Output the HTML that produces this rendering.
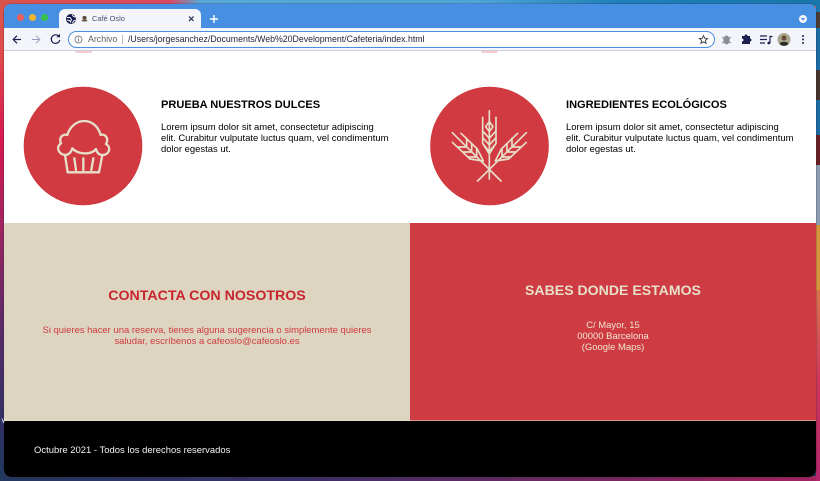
<!DOCTYPE html>
<html lang="es"><head><meta charset="utf-8"><title>Café Oslo</title>
<style>
*{box-sizing:border-box}
html,body{margin:0;padding:0}
body{width:820px;height:481px;position:relative;overflow:hidden;font-family:"Liberation Sans",Arial,sans-serif;background:linear-gradient(180deg,#d9564a 0,#e0474a 60px,#d8164f 140px,#a3245f 220px,#5e2a68 320px,#2d3165 430px,#1f3a5e 481px)}
.a{position:absolute;white-space:nowrap}
#top{left:0;top:0;width:820px;height:6px;background:linear-gradient(90deg,#d9534a 0,#d84a62 170px,#58a6d8 200px,#4ea3d6 480px,#1f7fb8 620px,#1a76ad 820px)}
#bot{left:0;top:476px;width:820px;height:5px;background:linear-gradient(90deg,#24385f 0,#3a2f66 300px,#75285f 600px,#a3235f 820px)}
#win{left:4px;top:4px;width:812px;height:473px;border-radius:7px;overflow:hidden;background:#fff;box-shadow:0 0 0 .5px rgba(40,40,60,.45)}
.s{position:absolute;left:816px;width:4px}
</style></head><body>
<div class="a" id="top"></div><div class="a" id="bot"></div>
<div class="s" style="top:0;height:12px;background:#1a76ad"></div>
<div class="s" style="top:12px;height:16px;background:#4a3a32"></div>
<div class="s" style="top:28px;height:42px;background:#1a6ca5"></div>
<div class="s" style="top:70px;height:30px;background:#45332c"></div>
<div class="s" style="top:100px;height:35px;background:#1a6ca5"></div>
<div class="s" style="top:135px;height:30px;background:#6a1f24"></div>
<div class="s" style="top:165px;height:60px;background:#8d9cb0"></div>
<div class="s" style="top:225px;height:65px;background:#d9953a"></div>
<div class="s" style="top:290px;height:191px;background:linear-gradient(180deg,#d9744a 0,#d0355a 90px,#b3246a 191px)"></div>
<div class="a" id="win"></div>
<div class="a" style="left:4px;top:4px;width:812px;height:473px;border-radius:7px;overflow:hidden">
  <div class="a" style="left:0;top:0;width:812px;height:24px;background:#478fe3"></div>
  <div class="a" style="left:0;top:24px;width:812px;height:22px;background:#f3f5fb"></div>
  <div class="a" style="left:0;top:46px;width:812px;height:1px;background:#c9cfe0"></div>
  <div class="a" style="left:71px;top:47px;width:17px;height:2px;border-radius:0 0 9px 9px;background:#f6ccd0"></div>
  <div class="a" style="left:477px;top:47px;width:17px;height:2px;border-radius:0 0 9px 9px;background:#f6ccd0"></div>
  <div class="a" style="left:0;top:219px;width:406px;height:198px;background:#ddd5bf"></div>
  <div class="a" style="left:406px;top:219px;width:406px;height:198px;background:#cf3b42"></div>
  <div class="a" style="left:0;top:416px;width:812px;height:1px;background:#e8dfc8;opacity:.55"></div>
  <div class="a" style="left:0;top:417px;width:812px;height:56px;background:#000"></div>
</div>
<!-- tab -->
<div class="a" style="left:59px;top:9px;width:142px;height:20px;background:#f3f5fb;border-radius:6px 6px 0 0"></div>
<div class="a" style="left:16.500px;top:13.500px;width:7px;height:7px;border-radius:50%;background:#ee5f57"></div>
<div class="a" style="left:28.500px;top:13.500px;width:7px;height:7px;border-radius:50%;background:#f0b62e"></div>
<div class="a" style="left:40.500px;top:13.500px;width:7px;height:7px;border-radius:50%;background:#37c14a"></div>
<div class="a" style="left:66px;top:14px;width:10px;height:10px;border-radius:50%;background:#151a4a"></div>
<div class="a" style="left:92px;top:13.500px;font-size:7.400px;line-height:10px;color:#46506e">Café Oslo</div>
<!-- omnibox -->
<div class="a" style="left:68px;top:31px;width:647px;height:17px;border:1.500px solid #4a8ee0;border-radius:9px;background:#fff"></div>
<div class="a" style="left:88px;top:34px;font-size:8.800px;line-height:11px;color:#5f6368">Archivo</div>
<div class="a" style="left:122px;top:35px;width:1px;height:9px;background:#b8bcc4"></div>
<div class="a" style="left:128px;top:34px;font-size:8.780px;line-height:11px;color:#22253a">/Users/jorgesanchez/Documents/Web%20Development/Cafeteria/index.html</div>
<!-- copy -->
<div class="a" style="left:161px;top:98px;font-size:11.050px;line-height:15px;font-weight:700;color:#000">PRUEBA NUESTROS DULCES</div>
<div class="a" style="left:161px;top:122px;font-size:9.460px;line-height:11px;color:#000">Lorem ipsum dolor sit amet, consectetur adipiscing<br>elit. Curabitur vulputate luctus quam, vel condimentum<br>dolor egestas ut.</div>
<div class="a" style="left:566px;top:98px;font-size:11.050px;line-height:15px;font-weight:700;color:#000">INGREDIENTES ECOLÓGICOS</div>
<div class="a" style="left:566px;top:122px;font-size:9.460px;line-height:11px;color:#000">Lorem ipsum dolor sit amet, consectetur adipiscing<br>elit. Curabitur vulputate luctus quam, vel condimentum<br>dolor egestas ut.</div>
<div class="a" style="left:4px;width:406px;top:287px;text-align:center;font-size:14.200px;line-height:18px;font-weight:700;color:#c9252f">CONTACTA CON NOSOTROS</div>
<div class="a" style="left:4px;width:406px;top:324.500px;text-align:center;font-size:9.460px;line-height:11px;color:#cf3a44">Si quieres hacer una reserva, tienes alguna sugerencia o simplemente quieres<br>saludar, escríbenos a cafeoslo@cafeoslo.es</div>
<div class="a" style="left:410px;width:406px;top:280.500px;text-align:center;font-size:14.100px;line-height:18px;font-weight:700;color:#e6dfc9">SABES DONDE ESTAMOS</div>
<div class="a" style="left:410px;width:406px;top:319.500px;text-align:center;font-size:9.460px;line-height:11px;color:#eee6d2">C/ Mayor, 15<br>00000 Barcelona<br>(Google Maps)</div>
<div class="a" style="left:34px;top:445px;font-size:9.460px;line-height:12px;color:#f4f4f4">Octubre 2021 - Todos los derechos reservados</div>
<!-- icons -->
<svg class="a" style="left:0;top:0" width="820" height="481" viewBox="0 0 820 481" fill="none">
  <path d="M2 418.500l1.500 4 1.500-4" stroke="#e8e8ee" stroke-width=".8"/>
  <path d="M67 17.500h3l1.500 2-1 2.500-1-1.500-2.500-.5M72 14.800l1.500 1.700 2 .5M72.500 23l1-2 2-1" stroke="#f3f5fb" stroke-width="1"/>
  <ellipse cx="84.500" cy="20.500" rx="3" ry="1" fill="#6a5648"/><rect x="82.500" y="16" width="4" height="3.500" rx="1.500" fill="#5b4a40"/>
  <path d="M189 16.500l4.500 4.500M193.500 16.500l-4.500 4.500" stroke="#3a4468" stroke-width="1.300"/>
  <path d="M214 15v8M210 19h8" stroke="#fff" stroke-width="1.400"/>
  <circle cx="803" cy="19" r="4" fill="#f6f8fd"/><path d="M800.800 18l2.200 2.600 2.200-2.600z" fill="#478fe3"/>
  <path d="M21 39.500h-7.500M17 35.700l-3.800 3.800 3.800 3.800" stroke="#1c1f50" stroke-width="1.200"/>
  <path d="M32 39.500h7.500M36 35.700l3.800 3.800-3.800 3.800" stroke="#9a9cc0" stroke-width="1"/>
  <path d="M59 36.500a4.300 4.300 0 1 0 .8 3.500" stroke="#1c1f50" stroke-width="1.200"/><path d="M60 33.800v3.500h-3.500z" fill="#1c1f50"/>
  <circle cx="78.500" cy="39.500" r="3.500" stroke="#5f6368" stroke-width=".8"/><path d="M78.500 38.500v3M78.500 37v.8" stroke="#5f6368" stroke-width=".8"/>
  <path d="M703.500 35.500l1.200 2.700 2.900.3-2.200 1.900.7 2.900-2.600-1.500-2.600 1.500.7-2.900-2.200-1.900 2.900-.3z" stroke="#3c4043" stroke-width=".9"/>
  <ellipse cx="726.500" cy="40" rx="3.200" ry="4.500" fill="#8a8d94"/><path d="M722 37l2 1.500M731 37l-2 1.500M722 43l2-1M731 43l-2-1" stroke="#8a8d94"/>
  <path d="M742 36h2.500a1.500 1.500 0 0 1 3 0h2.500v2.500a1.500 1.500 0 0 1 0 3v2.500h-8v-2.500a1.500 1.500 0 0 0 0-3z" fill="#1c1f50"/>
  <path d="M760 36h7M760 39.500h7M760 43h5M770 43v-6.500h2.500" stroke="#1c1f50" stroke-width="1.200"/><circle cx="768.800" cy="43" r="1.400" fill="#1c1f50"/>
  <circle cx="784" cy="39.500" r="6.500" fill="#a8a890"/><circle cx="784" cy="38" r="2.500" fill="#6b4a38"/><path d="M779.500 44c1-3 8-3 9 0a6.500 6.500 0 0 1-9 0z" fill="#2d2a28"/>
  <circle cx="803" cy="36" r="1" fill="#1c1f50"/><circle cx="803" cy="39.500" r="1" fill="#1c1f50"/><circle cx="803" cy="43" r="1" fill="#1c1f50"/>
  <circle cx="83" cy="146" r="59" fill="#d13a40" stroke="#cc2e36" stroke-width=".6"/>
  <circle cx="489.500" cy="146" r="59" fill="#d13a40" stroke="#cc2e36" stroke-width=".6"/>
  <g transform="translate(15 80) scale(.3333)" stroke="#e6dfc9" stroke-width="7" stroke-linejoin="round" stroke-linecap="round">
    <path d="M150 225C130 222 122 202 138 190C130 172 145 160 157 165C165 137 188 123 207 123C232 123 250 140 257 165C270 160 283 175 273 192C290 202 283 225 262 225C250 225 245 215 243 207C230 225 190 225 172 205C168 218 160 225 150 225Z"/>
    <path d="M150 225L158 277H252L262 225M178 235L183 270M205 235V270M235 235L229 270"/>
  </g>
  <g transform="translate(420 80) scale(.3333)" stroke="#e6dfc9" stroke-width="5" stroke-linecap="round" stroke-linejoin="round">
    <path d="M208 92V297M188 112V190L208 222L228 190V112M197 140L208 125L219 140L208 155ZM190 155L208 175L226 155M190 175L208 195L226 175M192 195L208 215L224 195"/>
    <path d="M97 158L243 303M123 160L172 207L190 243L150 237L97 187M140 201V175M140 201H113M155 216V190M155 216H128M170 231V205M170 231H143"/>
    <path d="M319 158L173 303M293 160L244 207L226 243L266 237L319 187M276 201V175M276 201H303M261 216V190M261 216H288M246 231V205M246 231H273"/>
  </g>
</svg>
</body></html>
